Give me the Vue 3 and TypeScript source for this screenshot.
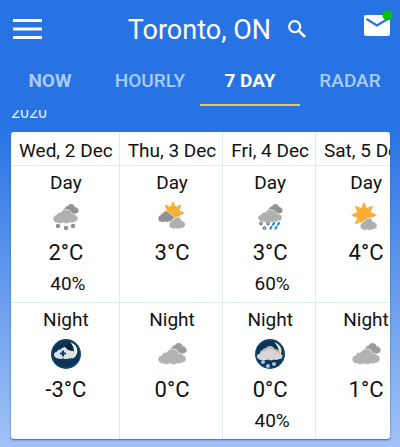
<script setup lang="ts">
import { ref } from 'vue'

interface Period {
  icon: string
  temp: string
  chance?: string
}
interface Day {
  date: string
  day: Period
  night: Period
}

const tabs = ['NOW', 'HOURLY', '7 DAY', 'RADAR']
const active = ref('7 DAY')

const days: Day[] = [
  { date: 'Wed, 2 Dec', day: { icon: 'snow', temp: '2°C', chance: '40%' }, night: { icon: 'night-cloud', temp: '-3°C' } },
  { date: 'Thu, 3 Dec', day: { icon: 'mixed', temp: '3°C' }, night: { icon: 'cloudy', temp: '0°C' } },
  { date: 'Fri, 4 Dec', day: { icon: 'sleet', temp: '3°C', chance: '60%' }, night: { icon: 'night-snow', temp: '0°C', chance: '40%' } },
  { date: 'Sat, 5 Dec', day: { icon: 'sunny', temp: '4°C' }, night: { icon: 'cloudy', temp: '1°C' } },
]
const periods: { key: 'day' | 'night'; label: string }[] = [
  { key: 'day', label: 'Day' },
  { key: 'night', label: 'Night' },
]
</script>

<template>
  <svg class="sprite" aria-hidden="true">
    <defs>
      <path id="cloud" d="M5 14C2 14 0 12 0 9.500C0 7.500 1.500 6 3.500 5.800C4 3.500 6 2.800 7.800 3.200C9 1 11 0 13.500 0C17 0 19 2 19.600 4.500C21 3.800 22.600 4.200 23.200 5.800C25 6 26 7.600 26 9.200C26 11.500 24.500 13 22 13C21 14 19 14.300 17.500 13.600C16 15 12.500 15 11 13.600C9 14.800 7 14.800 5 14Z" />
      <g id="rays">
        <path d="M-2.500-8 0-13 2.500-8ZM-2.500 8 0 13 2.500 8ZM-8-2.500-13 0-8 2.500ZM8-2.500 13 0 8 2.500Z" />
        <path transform="rotate(45)" d="M-2.500-8 0-13 2.500-8ZM-2.500 8 0 13 2.500 8ZM-8-2.500-13 0-8 2.500ZM8-2.500 13 0 8 2.500Z" />
        <circle r="8" />
      </g>
      <symbol id="snow" viewBox="0 0 32 32">
        <use href="#cloud" transform="translate(13 3) scale(.6 .72)" fill="#929292" />
        <use href="#cloud" transform="translate(3 8.500) scale(.96 .96)" fill="#b0b0b0" stroke="#fff" stroke-width=".6" />
        <g fill="#8e8e8e"><circle cx="8" cy="25" r="2.200" /><circle cx="16" cy="27" r="2.200" /><circle cx="23" cy="25" r="2.200" /></g>
      </symbol>
      <symbol id="mixed" viewBox="0 0 32 32">
        <use href="#rays" transform="translate(17 12) scale(.92)" fill="#f8ad35" />
        <use href="#cloud" transform="translate(2 10) scale(.62 .78)" fill="#929292" stroke="#fff" stroke-width=".8" />
        <use href="#cloud" transform="translate(13 16) scale(.63 .82)" fill="#b0b0b0" stroke="#fff" stroke-width="1" />
      </symbol>
      <symbol id="sleet" viewBox="0 0 32 32">
        <use href="#cloud" transform="translate(14 3) scale(.56 .7)" fill="#929292" />
        <use href="#cloud" transform="translate(4 8.500) scale(.93 .88)" fill="#b0b0b0" stroke="#fff" stroke-width=".6" />
        <g fill="#b4b0ac" stroke="#77736f" stroke-width="1"><circle cx="7" cy="22.500" r="1.500" /><circle cx="14" cy="22.500" r="1.500" /><circle cx="10.500" cy="27" r="1.500" /></g>
        <path d="M20 22l-1 1.500M25 22l-1 1.500M17.500 26l-1 1.500M22.500 26l-1 1.500" stroke="#2684d4" stroke-width="2.200" stroke-linecap="round" />
      </symbol>
      <symbol id="sunny" viewBox="0 0 32 32">
        <use href="#rays" transform="translate(14 14)" fill="#f8ad35" />
        <use href="#cloud" transform="translate(10 17) scale(.66 .85)" fill="#b0b0b0" stroke="#fff" stroke-width="1" />
      </symbol>
      <symbol id="cloudy" viewBox="0 0 32 32">
        <use href="#cloud" transform="translate(14 5) scale(.64 .77)" fill="#9b9b9b" />
        <use href="#cloud" transform="translate(2 11) scale(1.080 1.060)" fill="#b2b2b2" stroke="#fff" stroke-width=".6" />
      </symbol>
      <symbol id="night-cloud" viewBox="0 0 32 32">
        <circle cx="16" cy="16" r="15" fill="#154670" />
        <circle cx="16" cy="16" r="13.500" fill="#0c3459" />
        <path d="M20 4C29 7 30 17 22 21C25 15 25 9 20 4Z" fill="#f6f3cf" />
        <use href="#cloud" transform="translate(4 9) scale(.85 .82)" fill="#dde1e8" />
        <path d="M15 9l5-5 3 9-5-1z" fill="#08233f" />
        <path d="M13 12.500v6M10 15.500h6" stroke="#173e62" stroke-width="2" />
      </symbol>
      <symbol id="night-snow" viewBox="0 0 32 32">
        <circle cx="16" cy="16" r="15" fill="#154670" />
        <circle cx="16" cy="16" r="13.500" fill="#0c3459" />
        <path d="M20 4C28 7 29 13 26 18C25 12 24 8 20 4Z" fill="#e5edb5" />
        <use href="#cloud" transform="translate(6 8) scale(.75 .7)" fill="#bcb9bd" />
        <use href="#cloud" transform="translate(3 11) scale(.98 .78)" fill="#d9d5d5" />
        <g fill="#a9c8e2"><circle cx="9" cy="24" r="2" /><circle cx="14" cy="28" r="2" /><circle cx="20" cy="26" r="2" /></g>
      </symbol>
    </defs>
  </svg>

  <div class="app">
    <header class="bar">
      <button class="icon-btn menu" type="button" aria-label="Menu">
        <svg width="29" height="20" viewBox="0 0 29 20"><path d="M0 1.500h29M0 10h29M0 18.500h29" stroke="#fff" stroke-width="3" /></svg>
      </button>
      <h1>Toronto, ON</h1>
      <button class="icon-btn" type="button" aria-label="Search">
        <svg width="18" height="18" viewBox="0 0 18 18" fill="none" stroke="#fff"><circle cx="6.700" cy="6.700" r="5.500" stroke-width="2.200" /><path d="M11 11l6 6" stroke-width="2.500" /></svg>
      </button>
      <button class="icon-btn mail" type="button" aria-label="Messages">
        <svg width="30" height="28" viewBox="0 0 30 28"><rect y="5" width="26" height="21" rx="2" fill="#fff" /><path d="M2.500 9l10.500 6.500 10.500-6.500" fill="none" stroke="#2873e4" stroke-width="2.200" /><circle cx="23.500" cy="5.500" r="5" fill="#00c400" /></svg>
      </button>
    </header>

    <nav class="tabs">
      <button
        v-for="t in tabs"
        :key="t"
        type="button"
        :class="{ active: t === active, strong: t === 'NOW' }"
        @click="active = t"
      >{{ t }}</button>
    </nav>

    <main>
      <div class="issued"><span>2020</span></div>
      <div class="card">
        <table>
          <thead>
            <tr><th v-for="d in days" :key="d.date" scope="col">{{ d.date }}</th></tr>
          </thead>
          <tbody>
            <tr v-for="p in periods" :key="p.key">
              <td v-for="d in days" :key="d.date">
                <div class="cell">
                  <span class="name">{{ p.label }}</span>
                  <svg class="weather" aria-hidden="true"><use :href="'#' + d[p.key].icon" /></svg>
                  <span class="temp">{{ d[p.key].temp }}</span>
                  <span class="chance">{{ d[p.key].chance }}</span>
                </div>
              </td>
            </tr>
          </tbody>
        </table>
      </div>
    </main>
  </div>
</template>

<style>
body {
  background: #a2c2f4;
}
</style>

<style scoped>
.sprite {
  position: absolute;
  width: 0;
  height: 0;
}
.app {
  box-sizing: border-box;
  min-height: 100vh;
  font-family: Roboto, sans-serif;
  color: #111;
  background: linear-gradient(#2873e4 0, #2873e4 128px, #a2c2f4 100%);
}
button {
  border: 0;
  padding: 0;
  background: none;
  font: inherit;
  cursor: pointer;
}
.bar {
  display: flex;
  align-items: center;
  gap: 17px;
  height: 57px;
  padding: 0 6px 0 13px;
}
.icon-btn {
  display: flex;
}
.menu {
  margin-right: auto;
}
h1 {
  margin: 0;
  padding-top: 2px;
  font-size: 27px;
  line-height: 32px;
  font-weight: 400;
  color: #fff;
  white-space: nowrap;
}
.mail {
  margin-left: 41px;
  padding-bottom: 10px;
}
.tabs {
  display: grid;
  grid-template-columns: repeat(4, 1fr);
}
.tabs button {
  height: 49px;
  border-bottom: 2px solid transparent;
  font-size: 19px;
  font-weight: 500;
  color: #a9cbfa;
}
.tabs .strong {
  font-weight: 700;
}
.tabs .active {
  font-weight: 700;
  color: #fff;
  border-bottom-color: #e5c467;
}
main {
  padding: 4px 10px 6px 11px;
}
.issued {
  display: flex;
  align-items: flex-end;
  height: 12px;
  margin-bottom: 10px;
  overflow: hidden;
  font-size: 16px;
  line-height: 18px;
  color: #e3eeff;
}
.card {
  overflow: hidden;
  border-radius: 3px;
  background: #fff;
  box-shadow: 0 1px 2px #3c5f9b;
}
table {
  border-collapse: collapse;
}
th,
td {
  padding: 0 6px 0 8px;
  border-right: 1px solid #dcebf3;
}
th {
  height: 29px;
  padding-top: 4px;
  font-size: 19px;
  font-weight: 400;
  white-space: nowrap;
}
td {
  border-top: 1px solid #dcebf3;
}
.cell {
  display: flex;
  flex-direction: column;
  align-items: center;
  height: 136px;
}
.name {
  margin-top: 3px;
  font-size: 19px;
  line-height: 28px;
}
.weather {
  width: 32px;
  height: 32px;
  margin-top: 4px;
}
.temp {
  margin-top: 5px;
  font-size: 22px;
  line-height: 30px;
}
.chance {
  margin-top: 4px;
  margin-left: 4px;
  font-size: 19px;
  line-height: 24px;
}
</style>
